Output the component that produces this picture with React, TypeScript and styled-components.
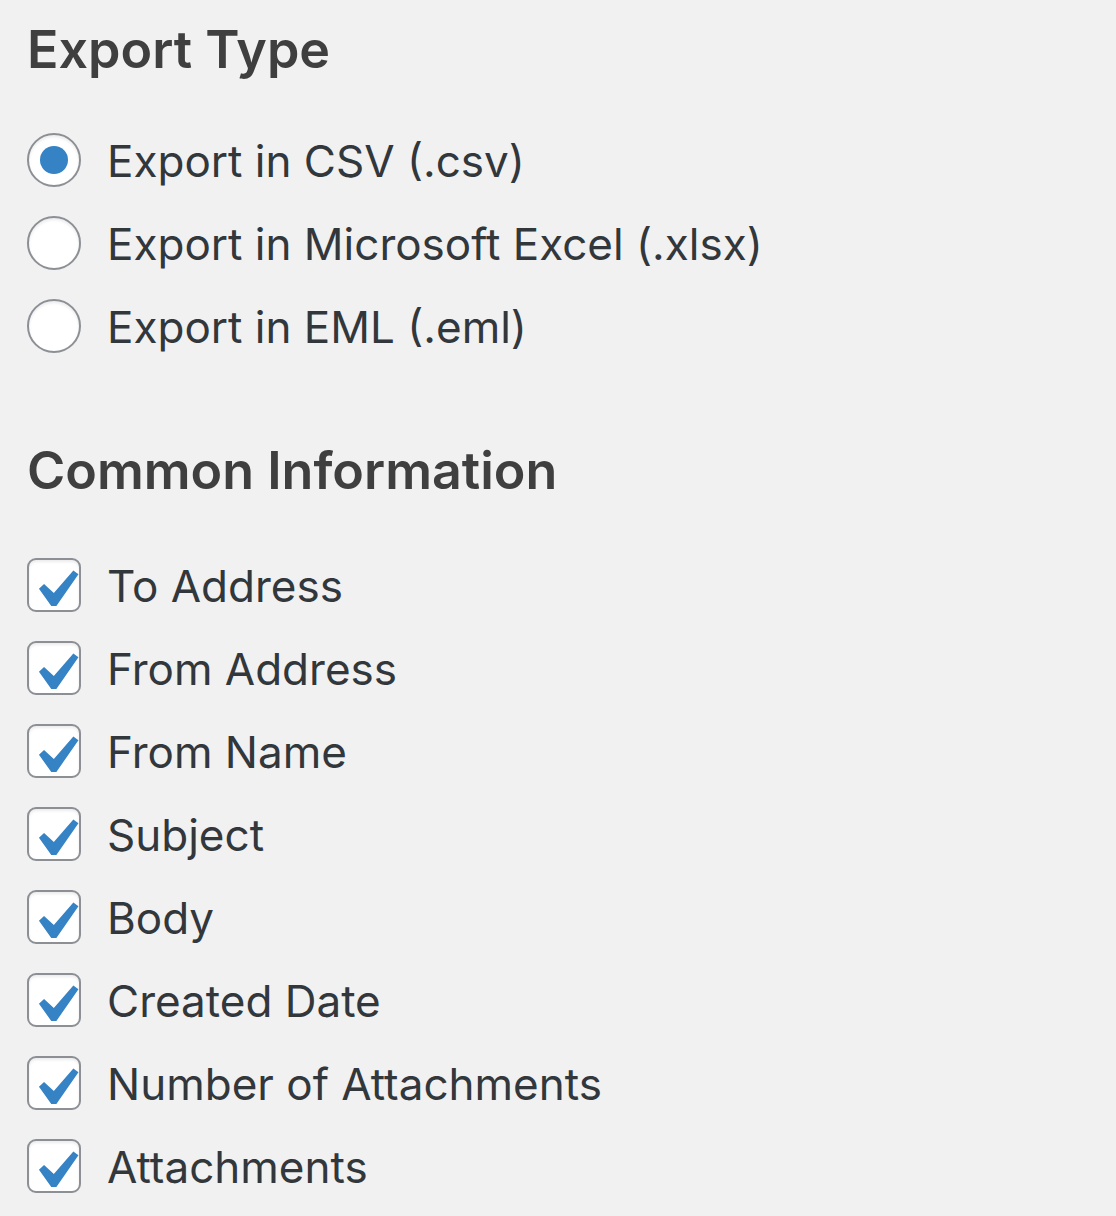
import React from "react";
import styled, { createGlobalStyle } from "styled-components";

const Global = createGlobalStyle`
  html, body { margin: 0; padding: 0; background: #f1f1f1; }
  body { font-family: Inter, "Noto Sans", sans-serif; }
`;

const Page = styled.div`
  padding: 14px 0 0 27px;
  display: flex;
  flex-direction: column;
`;

const Heading = styled.h2<{ $top: number }>`
  margin: ${(p) => p.$top}px 0 0 0;
  font-size: 52px;
  line-height: 72px;
  font-weight: 600;
  color: #3f3f3f;
  letter-spacing: 0;
`;

const List = styled.div<{ $top: number }>`
  margin-top: ${(p) => p.$top}px;
  display: flex;
  flex-direction: column;
`;

const Row = styled.label`
  display: flex;
  align-items: center;
  height: 83px;
  gap: 26px;
  cursor: pointer;
`;

const Label = styled.span`
  font-size: 44px;
  line-height: 54px;
  color: #32373c;
  padding-top: 3px;
`;

const RadioBox = styled.span<{ $on: boolean }>`
  width: 54px;
  height: 54px;
  box-sizing: border-box;
  border-radius: 50%;
  border: 2px solid #8c8f94;
  background: #fff;
  box-shadow: inset 0 2px 3px rgba(0, 0, 0, 0.08);
  display: flex;
  align-items: center;
  justify-content: center;
  flex-shrink: 0;
  &::after {
    content: "";
    display: ${(p) => (p.$on ? "block" : "none")};
    width: 28px;
    height: 28px;
    border-radius: 50%;
    background: #3582c4;
  }
`;

const CheckBox = styled.span`
  position: relative;
  width: 54px;
  height: 54px;
  box-sizing: border-box;
  border-radius: 9px;
  border: 2px solid #8c8f94;
  background: #fff;
  box-shadow: inset 0 2px 3px rgba(0, 0, 0, 0.08);
  flex-shrink: 0;
`;

const Tick = styled.svg`
  position: absolute;
  left: -12px;
  top: -8px;
  width: 76px;
  height: 76px;
`;

const radios = [
  "Export in CSV (.csv)",
  "Export in Microsoft Excel (.xlsx)",
  "Export in EML (.eml)",
];

const checks = [
  "To Address",
  "From Address",
  "From Name",
  "Subject",
  "Body",
  "Created Date",
  "Number of Attachments",
  "Attachments",
];

export default function App() {
  return (
    <>
      <Global />
      <Page>
        <Heading $top={0}>Export Type</Heading>
        <List $top={32}>
          {radios.map((r, i) => (
            <Row key={r}>
              <RadioBox $on={i === 0} />
              <Label>{r}</Label>
            </Row>
          ))}
        </List>
        <Heading $top={68}>Common Information</Heading>
        <List $top={36}>
          {checks.map((c) => (
            <Row key={c}>
              <CheckBox>
                <Tick viewBox="0 0 20 20">
                  <path
                    d="M14.83 4.89l1.34.94-5.81 8.38H9.02L5.78 9.67l1.34-1.25 2.57 2.4z"
                    fill="#3582c4"
                  />
                </Tick>
              </CheckBox>
              <Label>{c}</Label>
            </Row>
          ))}
        </List>
      </Page>
    </>
  );
}
